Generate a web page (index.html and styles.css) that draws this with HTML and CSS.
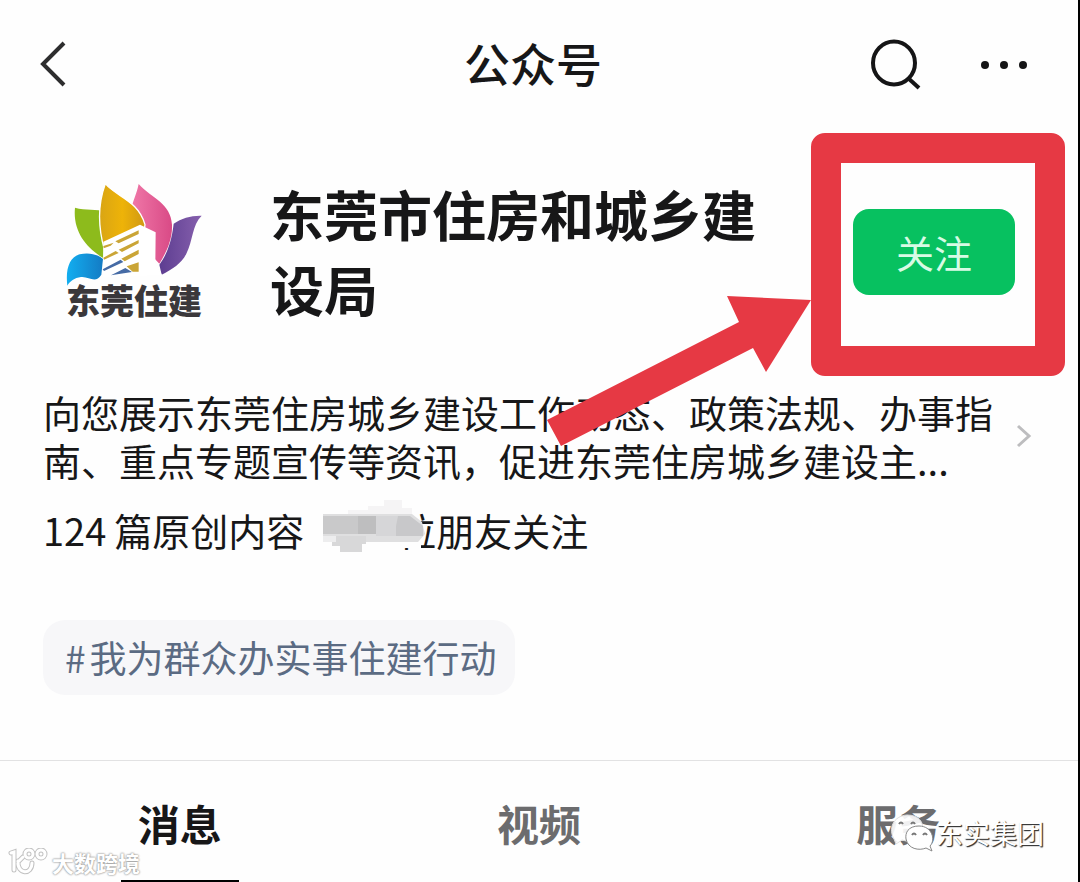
FILE: index.html
```html
<!DOCTYPE html>
<html lang="zh-CN">
<head>
<meta charset="utf-8">
<meta name="viewport" content="width=device-width, initial-scale=1">
<title>公众号</title>
<link rel="stylesheet" href="styles.css">
</head>
<body>
<div class="page">
  <header class="topbar">
    <button class="icon-btn back" type="button" aria-label="返回">
      <svg width="28" height="48" viewBox="0 0 28 48"><path d="M26 3 5 24 26 45" fill="none" stroke="#2d2d2e" stroke-width="4"/></svg>
    </button>
    <h1 class="topbar-title">公众号</h1>
    <div class="topbar-actions">
      <button class="icon-btn" type="button" aria-label="搜索">
        <svg width="52" height="52" viewBox="0 0 52 52"><ellipse cx="24" cy="25" rx="21" ry="21.500" fill="none" stroke="#151516" stroke-width="4"/><path d="M38 40 49 50" stroke="#151516" stroke-width="4"/></svg>
      </button>
      <button class="icon-btn" type="button" aria-label="更多">
        <svg width="48" height="12" viewBox="0 0 48 12" fill="#151516"><circle cx="5" cy="7" r="4"/><circle cx="24" cy="7" r="4"/><circle cx="43" cy="7" r="4"/></svg>
      </button>
    </div>
  </header>

  <main>
    <section class="profile">
      <div class="logo">
        <svg class="logo-mark" width="138" height="104" viewBox="50 40 414 312">
          <defs>
            <linearGradient id="gold" x1="0" x2="1"><stop offset="0" stop-color="#d9a514"/><stop offset=".5" stop-color="#eeb308"/><stop offset="1" stop-color="#cf9814"/></linearGradient>
            <linearGradient id="pink" x1="0" x2="1"><stop offset="0" stop-color="#f078a8"/><stop offset="1" stop-color="#d94a86"/></linearGradient>
            <linearGradient id="violet" x1="0" x2="1"><stop offset="0" stop-color="#5d3d91"/><stop offset="1" stop-color="#8660ad"/></linearGradient>
            <linearGradient id="blue" x1="0" x2="1"><stop offset="0" stop-color="#12aef0"/><stop offset="1" stop-color="#147bc4"/></linearGradient>
          </defs>
          <path d="M77 114C108 124 142 115 170 128L188 240 160 264C108 232 70 182 77 114Z" fill="#8dbb1c"/>
          <path d="M268 43C310 88 364 100 368 165 370 215 346 255 330 282L300 250 245 120C252 90 262 72 268 43Z" fill="url(#pink)"/>
          <path d="M168 42C202 82 266 92 287 165L268 310 212 290 165 240C150 186 142 112 168 42Z" fill="url(#gold)" stroke="#fff" stroke-width="4"/>
          <path d="M457 138C428 166 431 214 411 252 397 281 369 299 337 315L330 285C350 258 366 222 373 162 397 145 426 137 457 138Z" fill="url(#violet)"/>
          <path d="M54 348C48 300 60 262 91 254 119 248 145 254 161 268L156 315C138 344 118 319 95 322 75 325 62 334 54 348Z" fill="url(#blue)"/>
          <path d="M162 216 272 165 319 188 318 278 338 316 160 322Z" fill="#fff"/>
          <g fill="#caa536"><path d="M163 236 184 228 193 219 162 229ZM198 215 268 182 268 193 208 221ZM162 264 199 244 208 250 164 270ZM208 240 268 211 268 221 218 247ZM216 267 268 240 268 253 226 275ZM232 290 268 278 268 306 250 306Z"/></g>
          <g fill="#466ba5"><path d="M160 299 214 270 222 277 164 304ZM185 317 228 295 248 307 214 312Z"/></g>
        </svg>
        <span class="logo-text">东莞住建</span>
      </div>
      <h2 class="name">东莞市住房和城乡建设局</h2>
      <div class="follow">
        <button class="follow-btn" type="button">关注</button>
        <svg class="arrow" width="266" height="152" viewBox="0 0 266 152" aria-hidden="true"><path d="M0 124 192 26 180 0 264 4 219 76 206 52 14 150Z" fill="#e63944"/></svg>
      </div>
    </section>

    <section class="about">
      <div class="intro">
        <p class="intro-text">向您展示东莞住房城乡建设工作动态、政策法规、办事指南、重点专题宣传等资讯，促进东莞住房城乡建设主...</p>
        <svg class="chevron" width="16" height="24" viewBox="0 0 16 24"><path d="M2 2 13 12 2 22" fill="none" stroke="#bdbdbf" stroke-width="3"/></svg>
      </div>
      <div class="meta">
        <span class="originals"><span>124</span><span>篇原创内容</span></span>
        <span class="friends">位朋友关注
          <svg class="mosaic" width="112" height="56" viewBox="0 0 112 56" aria-hidden="true">
            <path d="M78 8H96V20L103 26V48H78Z" fill="#fefefe"/>
            <path d="M30 10H50V6H66V0H84V8H94V20H30Z" fill="#f5f4f5"/>
            <path d="M5 14H94L104 22 107 34 100 42H5Z" fill="#dfdfe0"/>
            <path d="M5 16H40V34H5Z" fill="#c9c9ca"/><path d="M40 16H58V34H40Z" fill="#bebebf"/><path d="M58 16H80V36H58Z" fill="#d6d6d8"/><path d="M80 16H92L105 26V36H78V26Z" fill="#c8c8ca"/>
            <path d="M14 36H48V44H44V52H22V46H14Z" fill="#d8d8d9"/><path d="M5 36H18V42H5Z" fill="#ededee"/>
          </svg>
        </span>
      </div>
      <a class="tag" href="#topic"><span>#</span><span>我为群众办实事住建行动</span></a>
    </section>

    <nav class="tabs">
      <a class="tab active" href="#messages">消息</a>
      <a class="tab" href="#videos">视频</a>
      <a class="tab" href="#services">服务</a>
    </nav>
  </main>

  <div class="mark mark-left">
    <svg width="42" height="28" viewBox="0 0 42 28" fill="none" stroke-linecap="round"><g stroke="#c2c2c2" stroke-width="5"><path d="M3 5 6 4V22M10 13C9 27 24 27 24 15M10 14 15 9"/><circle cx="21" cy="6" r="4"/><circle cx="33" cy="6" r="4"/></g><g stroke="#fff" stroke-width="3"><path d="M3 5 6 4V22M10 13C9 27 24 27 24 15M10 14 15 9"/><circle cx="21" cy="6" r="4"/><circle cx="33" cy="6" r="4"/></g></svg>
    <span>大数跨境</span>
  </div>
  <div class="mark mark-right">
    <svg width="46" height="40" viewBox="0 0 46 40"><path d="M4 26C-2 16 3 3 17 2 29 2 33 9 33 16L20 29 12 27 6 31Z" fill="#fff" fill-opacity=".9" stroke="#ddd"/><path d="M29 13C18 13 15 20 16 26 18 36 29 38 36 35L42 38 40 33C46 27 42 13 29 13Z" fill="#fff" stroke="#888"/><g fill="none" stroke="#777" stroke-width="2"><path d="M9 11Q11 8 13 11M21 11Q23 8 25 11M22 22Q24 19 26 22M33 22Q35 19 37 22"/></g></svg>
    <span>东实集团</span>
  </div>
</div>
</body>
</html>
```
FILE: styles.css
```css
* {
  box-sizing: border-box;
}

body {
  margin: 0;
  background: #fefefe;
  color: #171718;
  font-family: "Noto Sans CJK SC", "Noto Sans", sans-serif;
}

h1, h2, p {
  margin: 0;
}

button {
  padding: 0;
  border: 0;
  background: none;
  font-family: inherit;
}

a {
  text-decoration: none;
}

svg {
  display: block;
}

.page {
  position: relative;
  min-height: 100vh;
  border-right: 2px solid #000;
}

/* Top bar */
.topbar {
  display: grid;
  grid-template-columns: 1fr auto 1fr;
  align-items: center;
  height: 128px;
  padding: 0 50px 0 38px;
}

.back {
  justify-self: start;
}

.topbar-title {
  padding-bottom: 4px;
  font-size: 46px;
  font-weight: 500;
  line-height: 64px;
}

.topbar-actions {
  display: flex;
  justify-content: flex-end;
  align-items: center;
  gap: 58px;
}

/* Account */
.profile {
  display: flex;
  align-items: flex-start;
  padding: 48px 63px 0 66px;
}

.logo {
  flex: none;
  width: 138px;
  margin-right: 66px;
  padding-top: 7px;
}

.logo-text {
  display: block;
  color: #3b383b;
  font-size: 34px;
  font-weight: 900;
  line-height: 26px;
  white-space: nowrap;
}

.name {
  flex: 1;
  max-width: 500px;
  font-size: 54px;
  font-weight: 700;
  line-height: 75px;
}

.follow {
  position: relative;
  flex: none;
  margin: 33px 0 0 auto;
}

.follow::before {
  content: "";
  position: absolute;
  inset: -76px -50px -81px -42px;
  border: 30px solid #e63944;
  border-radius: 14px;
  pointer-events: none;
}

.follow-btn {
  position: relative;
  display: block;
  width: 162px;
  height: 86px;
  padding-bottom: 2px;
  border-radius: 16px;
  background: #07c160;
  color: #d8fbe5;
  font-size: 38px;
}

.arrow {
  position: absolute;
  top: 87px;
  right: 202px;
  z-index: 1;
}

/* Description */
.about {
  padding: 62px 46px 65px 43px;
}

.intro {
  display: flex;
  align-items: center;
  justify-content: space-between;
}

.intro-text {
  flex: 1;
  max-width: 960px;
  font-size: 38px;
  line-height: 48px;
}

.meta {
  display: flex;
  gap: 94px;
  margin-top: 20px;
  font-size: 38px;
  line-height: 52px;
}

.originals {
  display: flex;
  gap: 8px;
}

.friends {
  position: relative;
}

.mosaic {
  position: absolute;
  top: -4px;
  left: -80px;
}

.tag {
  display: flex;
  gap: 4px;
  width: fit-content;
  margin-top: 64px;
  padding: 0 18px 0 22px;
  border-radius: 22px;
  background: #f7f7f9;
  color: #5b6b83;
  font-size: 37px;
  line-height: 75px;
}

/* Tabs */
.tabs {
  display: grid;
  grid-template-columns: repeat(3, 1fr);
  border-top: 1px solid #e2e2e3;
}

.tab {
  position: relative;
  height: 121px;
  color: #6c6c6e;
  font-size: 42px;
  font-weight: 700;
  line-height: 124px;
  text-align: center;
}

.active {
  color: #171718;
}

.active::after {
  content: "";
  position: absolute;
  bottom: 0;
  left: 50%;
  width: 118px;
  height: 2px;
  margin-left: -59px;
  background: #000;
}

/* Watermarks */
.mark {
  position: absolute;
  display: flex;
  align-items: center;
  white-space: nowrap;
}

.mark-left {
  bottom: 4px;
  left: 8px;
  gap: 2px;
  color: #fff;
  font-size: 22px;
  font-weight: 700;
  line-height: 32px;
  text-shadow: 0 0 2px #888, 0 0 2px #aaa;
}

.mark-right {
  right: 34px;
  bottom: 29px;
  color: #fff;
  font-size: 27px;
  line-height: 40px;
  text-shadow: 1px 1px 1px #333, 1px 1px 1px #666;
}
```
